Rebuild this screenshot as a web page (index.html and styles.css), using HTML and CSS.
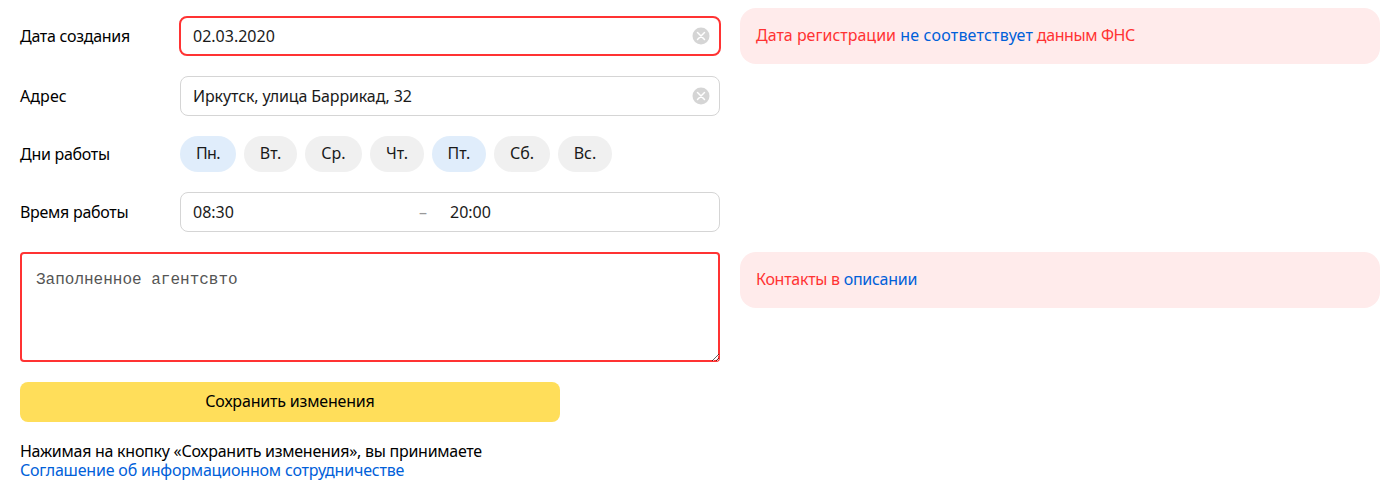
FILE: index.html
```html
<!DOCTYPE html>
<html lang="ru">
<head>
<meta charset="utf-8">
<title>Агентство</title>
<link rel="stylesheet" href="styles.css">
</head>
<body>
<form class="form">
  <div class="line line_first">
    <div class="field">
      <span class="label">Дата создания</span>
      <div class="input input_error"><span>02.03.2020</span>
        <svg class="clear" viewBox="0 0 18 18"><circle cx="9" cy="9" r="8.5"/><path d="M5.5 5.5l7 7m0-7l-7 7"/></svg>
      </div>
    </div>
    <div class="notice"><span>Дата регистрации <a class="link link_wide">не соответствует</a><span class="tight"> данным ФНС</span></span></div>
  </div>
  <div class="field">
    <span class="label label_address">Адрес</span>
    <div class="input"><span class="address">Иркутск, улица Баррикад, 32</span>
      <svg class="clear" viewBox="0 0 18 18"><circle cx="9" cy="9" r="8.5"/><path d="M5.5 5.5l7 7m0-7l-7 7"/></svg>
    </div>
  </div>
  <div class="field field_days">
    <span class="label">Дни работы</span>
    <div class="days">
      <span class="day day_on day_mon">Пн.</span>
      <span class="day day_tue">Вт.</span>
      <span class="day day_wed">Ср.</span>
      <span class="day day_thu">Чт.</span>
      <span class="day day_on day_fri">Пт.</span>
      <span class="day day_sat">Сб.</span>
      <span class="day day_sun">Вс.</span>
    </div>
  </div>
  <div class="field">
    <span class="label">Время работы</span>
    <div class="input input_time"><span class="from">08:30</span><span class="dash">–</span><span>20:00</span></div>
  </div>
  <div class="line">
    <textarea class="area" spellcheck="false">Заполненное агентсвто</textarea>
    <div class="notice notice_tight"><span>Контакты в <a class="link">описании</a></span></div>
  </div>
  <button class="save" type="button">Сохранить изменения</button>
  <div class="terms"><span class="terms-text">Нажимая на кнопку «Сохранить изменения», вы принимаете</span><a class="link terms-link">Соглашение об информационном сотрудничестве</a></div>
</form>
</body>
</html>
```
FILE: styles.css
```css
* { box-sizing: border-box; }
body { margin: 0; background: #fff; color: #000; font: 16px/19px "Noto Sans", sans-serif; }
.form { display: flex; flex-direction: column; gap: 20px; padding: 8px 20px 20px; }
.line { display: flex; align-items: flex-start; gap: 20px; }
.line_first { height: 48px; }
.line_first .field { margin-top: 8px; }
.field { display: flex; align-items: center; width: 700px; height: 40px; flex: none; }
.field_days { height: 36px; }
.label { width: 160px; flex: none; white-space: nowrap; letter-spacing: -0.28px; }
.label_address { letter-spacing: 0.1px; }
.input { display: flex; align-items: center; justify-content: space-between; flex: none; width: 540px; height: 40px; padding: 0 9px 0 12px; border: 1px solid #d5d5d5; border-radius: 8px; color: #1a1a1a; }
.input_error { width: 542px; margin: 0 -1px; border: 2px solid #f33; }
.address { letter-spacing: -0.12px; }
.clear { width: 18px; height: 18px; }
.clear circle { fill: #d5d5d5; }
.clear path { fill: none; stroke: #fff; stroke-width: 1.5; stroke-linecap: round; }
.input_time { justify-content: flex-start; }
.from { width: 226px; }
.dash { width: 31px; color: #999; }
.days { display: flex; gap: 8px; }
.day { width: 56px; height: 36px; border-radius: 18px; background: #f0f0f0; color: #1a1a1a; text-align: center; line-height: 35px; }
.day_on { background: #e0edfb; }
.day_mon { letter-spacing: -0.6px; }
.day_tue { width: 53px; }
.day_wed { width: 57px; }
.day_thu, .day_fri, .day_sun { width: 54px; }
.notice { flex: 1; height: 56px; padding: 18px 16px; border-radius: 16px; background: #ffebeb; color: #f33; }
.notice_tight { letter-spacing: -0.28px; }
.link { color: #0060d9; }
.link_wide { letter-spacing: 0.2px; }
.tight { letter-spacing: -0.4px; }
.area { display: block; width: 700px; height: 110px; margin: 0; flex: none; padding: 19px 16px; border: 0; box-shadow: inset 0 0 0 2px #f33; border-radius: 4px; color: #555; background: #fff; font: 16px/19px "Courier New", "Liberation Mono", monospace; outline: 0; }
.save { width: 540px; height: 40px; padding: 0 0 2px; border: 0; border-radius: 8px; background: #ffde5a; color: #000; font: 16px/19px "Noto Sans", sans-serif; letter-spacing: -0.18px; }
.terms { display: flex; flex-direction: column; white-space: nowrap; }
.terms-text { letter-spacing: -0.265px; }
.terms-link { letter-spacing: -0.19px; }
```
